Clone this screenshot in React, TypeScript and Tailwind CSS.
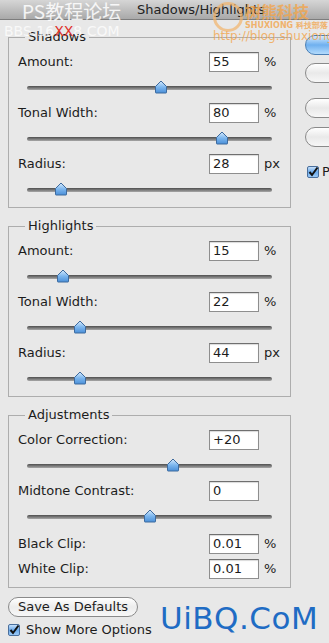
import React from "react";

type Ctl = { label: string; value: string; unit: string; thumb?: number };

const shadows: Ctl[] = [
  { label: "Amount:", value: "55", unit: "%", thumb: 134 },
  { label: "Tonal Width:", value: "80", unit: "%", thumb: 195 },
  { label: "Radius:", value: "28", unit: "px", thumb: 34 },
];

const highlights: Ctl[] = [
  { label: "Amount:", value: "15", unit: "%", thumb: 36 },
  { label: "Tonal Width:", value: "22", unit: "%", thumb: 53 },
  { label: "Radius:", value: "44", unit: "px", thumb: 53 },
];

const Thumb = () => (
  <svg width="14" height="14" viewBox="0 0 14 14">
    <defs>
      <linearGradient id="thumbGrad" x1="0" y1="0" x2="0" y2="1">
        <stop offset="0" stopColor="#d9ecfd" />
        <stop offset="0.5" stopColor="#7db7ef" />
        <stop offset="1" stopColor="#4a8fd8" />
      </linearGradient>
    </defs>
    <path d="M1.5 6.5 L7 1 L12.5 6.5 L12.5 12.5 Q12.5 13 12 13 L2 13 Q1.5 13 1.5 12.5 Z" fill="url(#thumbGrad)" stroke="#3d6a9e" strokeWidth="1" />
  </svg>
);

const Slider = ({ pos }: { pos: number }) => (
  <div className="relative mx-[18px] h-[31px]">
    <div className="absolute left-0 right-0 top-[14px] h-[4px] rounded-full bg-gradient-to-b from-[#4f4f4f] to-[#a8a8a8]" />
    <div className="absolute top-[8px]" style={{ left: pos - 7 }}>
      <Thumb />
    </div>
  </div>
);

const Field = ({ label, value, unit }: { label: string; value: string; unit: string }) => (
  <div className="flex h-[20px] items-center pl-[9px]">
    <span className="flex-1">{label}</span>
    <div className="flex h-[20px] w-[50px] items-center border border-[#8e8e8e] border-t-[#6f6f6f] bg-white pl-[3px] shadow-[inset_0_1px_1px_rgba(0,0,0,0.15)]">
      {value}
    </div>
    <span className="w-[31px] pl-[5px]">{unit}</span>
  </div>
);

const Group = ({ title, items, className }: { title: string; items: Ctl[]; className?: string }) => (
  <fieldset className={`border border-[#adadad] pb-[2px] ${className ?? ""}`}>
    <legend className="ml-[16px] px-[3px] leading-[16px]">{title}</legend>
    <div className="mt-[7px]">
      {items.map((c) => (
        <div key={c.label}>
          <Field label={c.label} value={c.value} unit={c.unit} />
          <Slider pos={c.thumb ?? 0} />
        </div>
      ))}
    </div>
  </fieldset>
);

const Check = () => (
  <svg width="12" height="12" viewBox="0 0 12 12">
    <defs>
      <linearGradient id="chkGrad" x1="0" y1="0" x2="0" y2="1">
        <stop offset="0" stopColor="#cfe5fb" />
        <stop offset="0.5" stopColor="#6aa9ea" />
        <stop offset="1" stopColor="#9fcdf8" />
      </linearGradient>
    </defs>
    <rect x="0.5" y="0.5" width="11" height="11" rx="1.5" fill="url(#chkGrad)" stroke="#4a6f9c" />
    <path d="M2.5 6 L5 9 L10.5 1.5" fill="none" stroke="#111" strokeWidth="2" />
  </svg>
);

const SideButton = ({ label, primary }: { label: string; primary?: boolean }) => (
  <div
    className={`flex h-[20px] w-[100px] items-center justify-center rounded-full border ${
      primary
        ? "border-[#4a7fb5] bg-gradient-to-b from-[#d4eafd] via-[#6fb0ef] to-[#b3dbfc]"
        : "border-[#8a8a8a] bg-gradient-to-b from-[#ffffff] via-[#e9e9e9] to-[#f7f7f7]"
    }`}
  >
    {label}
  </div>
);

export default function App() {
  return (
    <div className="relative h-[643px] w-[329px] overflow-hidden bg-[#e8e8e8] text-[13px] text-[#1c1c1c] [font-family:'DejaVu_Sans',sans-serif]">
      {/* title bar */}
      <div className="flex h-[20px] items-center border-b border-[#7d7d7d] bg-gradient-to-b from-[#d6d6d6] to-[#a9a9a9] pl-[137px] text-[#222]">
        Shadows/Highlights
      </div>

      <div className="flex">
        {/* main column */}
        <div className="ml-[8px] mt-[9px] w-[283px] shrink-0">
          <Group title="Shadows" items={shadows} />
          <Group title="Highlights" items={highlights} className="mt-[10px]" />

          <fieldset className="mt-[10px] border border-[#adadad] pb-[8px]">
            <legend className="ml-[16px] px-[3px] leading-[16px]">Adjustments</legend>
            <div className="mt-[7px]">
              <Field label="Color Correction:" value="+20" unit="" />
              <Slider pos={146} />
              <Field label="Midtone Contrast:" value="0" unit="" />
              <Slider pos={123} />
              <div className="mt-[2px] flex flex-col gap-[5px]">
                <Field label="Black Clip:" value="0.01" unit="%" />
                <Field label="White Clip:" value="0.01" unit="%" />
              </div>
            </div>
          </fieldset>

          <div className="mt-[9px] flex h-[20px] w-[130px] items-center justify-center rounded-full border border-[#8a8a8a] bg-gradient-to-b from-[#ffffff] via-[#ececec] to-[#f8f8f8]">
            Save As Defaults
          </div>
          <div className="mt-[6px] flex h-[14px] items-center gap-[6px] leading-[14px]">
            <Check />
            <span>Show More Options</span>
          </div>
        </div>

        {/* side column */}
        <div className="ml-[14px] mt-[15px] flex shrink-0 flex-col">
          <SideButton label="OK" primary />
          <div className="mt-[8px]">
            <SideButton label="Cancel" />
          </div>
          <div className="mt-[15px]">
            <SideButton label="Load..." />
          </div>
          <div className="mt-[9px]">
            <SideButton label="Save..." />
          </div>
          <div className="mt-[15px] flex items-center gap-[3px] pl-[2px]">
            <Check />
            <span>Preview</span>
          </div>
        </div>
      </div>

      {/* watermarks */}
      <div className="pointer-events-none absolute left-[22px] top-[0px] text-[19px] leading-[22px] text-white/85 [font-family:'Noto_Sans_CJK_SC',sans-serif]">
        PS教程论坛
      </div>
      <div className="pointer-events-none absolute left-[4px] top-[23px] text-[14px] leading-[16px] text-white/75">
        BBS.16<span className="text-[#e0302a]">XX</span>8.COM
      </div>
      <div className="pointer-events-none absolute left-[213px] top-[2px] text-[#f2a44a]/80">
        <div className="flex items-start gap-[2px]">
          <div className="h-[30px] w-[30px] rounded-full border-[3px] border-[#f2b36a]/70" />
          <div className="flex flex-col">
            <span className="text-[16px] font-bold leading-[18px] [font-family:'Noto_Sans_CJK_SC',sans-serif]">树熊科技</span>
            <span className="text-[8px] font-bold leading-[12px]">SHUXIONG 科技部落</span>
          </div>
        </div>
        <div className="-mt-[2px] text-[12px] leading-[13px]">http://blog.shuxiong.net</div>
      </div>
      <div className="pointer-events-none absolute left-[160px] top-[600px] text-[31px] leading-[36px] tracking-[0.5px] text-[#1f6cc4]">
        UiBQ.CoM
      </div>
    </div>
  );
}
